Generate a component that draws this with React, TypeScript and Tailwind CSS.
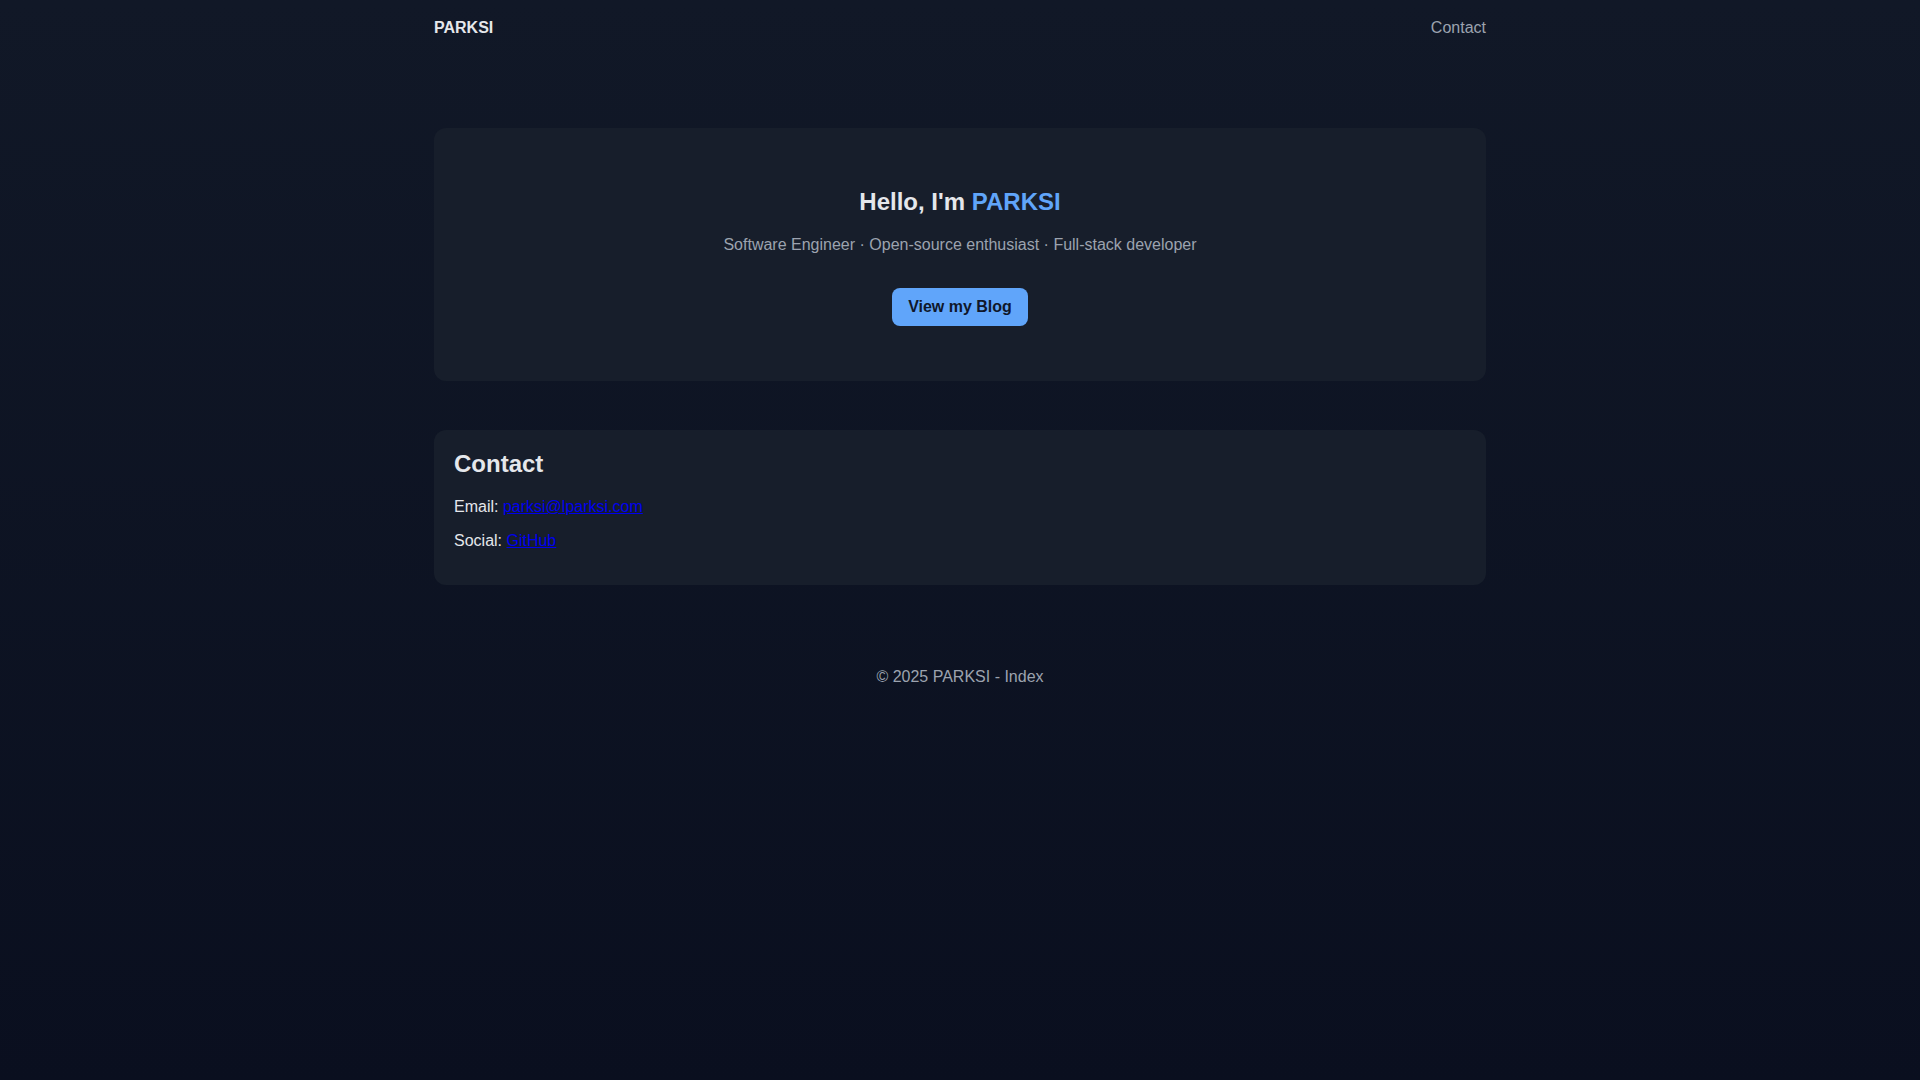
import React from "react";

export default function App() {
  return (
    <div
      className="min-h-screen bg-linear-to-b from-[#111827] to-[#0a0f1f] text-[#e5e7eb]"
      style={{ fontFamily: '"Liberation Sans", Arial, sans-serif' }}
    >
      <div className="mx-auto max-w-[1100px] px-6">
        <header className="flex items-center justify-between py-4 leading-6">
          <span className="text-base font-bold text-[#e5e7eb]">PARKSI</span>
          <a className="text-base text-[#9ca3af]" href="#contact">Contact</a>
        </header>

        <main className="mt-[72px] flex flex-col gap-[49px]">
          <section className="rounded-xl bg-[#171e2b] px-5 pt-[58px] pb-[55px] text-center">
            <h1 className="text-2xl font-bold leading-8 text-[#e5e7eb]">
              Hello, I'm <span className="text-[#60a5fa]">PARKSI</span>
            </h1>
            <p className="mt-[15px] text-base leading-6 text-[#9ca3af]">
              Software Engineer · Open-source enthusiast · Full-stack developer
            </p>
            <div className="mt-[31px] flex justify-center">
              <a
                href="#blog"
                className="rounded-lg bg-[#60a5fa] px-4 py-2 text-base font-bold leading-[22px] text-[#0f172a]"
              >
                View my Blog
              </a>
            </div>
          </section>

          <section id="contact" className="rounded-xl bg-[#171e2b] px-5 pt-[19px] pb-[31px]">
            <h2 className="text-2xl font-bold leading-[29px] text-[#e5e7eb]">Contact</h2>
            <p className="mt-[16px] text-base leading-[26px] text-[#e5e7eb]">
              Email: <a href="mailto:parksi@lparksi.com" className="text-[#0000ee] underline">parksi@lparksi.com</a>
            </p>
            <p className="mt-2 text-base leading-[26px] text-[#e5e7eb]">
              Social: <a href="#github" className="text-[#0000ee] underline">GitHub</a>
            </p>
          </section>
        </main>

        <footer className="mt-[80px] text-center text-base leading-6 text-[#9ca3af]">
          © 2025 PARKSI - Index
        </footer>
      </div>
    </div>
  );
}
